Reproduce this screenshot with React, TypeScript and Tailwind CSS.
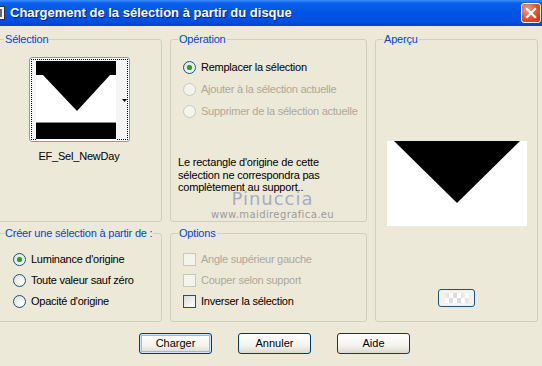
import React from "react"

const font = "font-['Liberation_Sans',Arial,sans-serif]"

const Radio = ({ checked, disabled }: { checked?: boolean; disabled?: boolean }) => (
  <span
    className={`relative inline-flex size-[13px] shrink-0 items-center justify-center rounded-full border ${
      disabled
        ? "border-[#cac8bb] bg-[#f5f4ea]"
        : "border-[#1c5180] bg-[radial-gradient(circle_at_70%_70%,#ffffff,#dcdcd3)]"
    }`}
  >
    {checked && <span className="size-[5px] rounded-full bg-[#21a121] shadow-[0_0_1px_#5fd25f]" />}
  </span>
)

const Check = ({ disabled }: { disabled?: boolean }) => (
  <span
    className={`inline-block size-[13px] shrink-0 border ${
      disabled
        ? "border-[#cac8bb] bg-[#f5f4ea]"
        : "border-[#1c5180] bg-[linear-gradient(135deg,#dcdcd3,#ffffff)]"
    }`}
  />
)

const Group = ({
  label,
  className,
  children,
}: {
  label: string
  className?: string
  children?: React.ReactNode
}) => (
  <fieldset className={`rounded-[3px] border border-[#d0d0bf] ${className ?? ""}`}>
    <legend className="ml-[7px] whitespace-nowrap px-[1px] text-[11px] leading-[13px] tracking-[-0.2px] text-[#0046d5]">
      {label}
    </legend>
    {children}
  </fieldset>
)

const Button = ({ label, primary }: { label: string; primary?: boolean }) => (
  <div
    className={`flex h-[21px] w-[73px] items-center justify-center rounded-[3px] border border-[#003c74] bg-[linear-gradient(#ffffff,#f4f3ee_60%,#dcd9cc)] text-[11px] text-black ${
      primary ? "shadow-[inset_0_0_0_1px_#cee7ff,inset_0_0_0_2px_#98b8ea]" : ""
    }`}
  >
    {label}
  </div>
)

const Row = ({ children, muted }: { children: React.ReactNode; muted?: boolean }) => (
  <div
    className={`flex items-center gap-[5px] whitespace-nowrap tracking-[-0.25px] ${
      muted ? "text-[#aca899]" : "text-black"
    }`}
  >
    {children}
  </div>
)

export default function App() {
  return (
    <div className={`h-[366px] w-[542px] overflow-hidden bg-[#ece9d8] ${font}`}>
      {/* title bar */}
      <div className="flex h-[26px] items-center bg-[linear-gradient(#3d8fff,#0a5fea_12%,#0055e5_45%,#0050e0_80%,#0045cf)]">
        <svg width="16" height="16" viewBox="0 0 16 16" className="-ml-[11px] shrink-0">
          <rect x="0.5" y="1.5" width="15" height="13" fill="#f0f0f0" stroke="#333" />
          <rect x="3" y="4" width="10" height="8" fill="#5a6a7a" />
        </svg>
        <span className="ml-[5px] whitespace-nowrap text-[13px] font-bold text-white [text-shadow:1px_1px_#0a1e8a]">
          Chargement de la sélection à partir du disque
        </span>
        <div className="ml-auto mr-[1px] flex size-[20px] items-center justify-center rounded-[3px] border border-white bg-[radial-gradient(circle_at_30%_30%,#f0a088,#e0502c_55%,#c53410)]">
          <svg width="12" height="12" viewBox="0 0 12 12">
            <path d="M2 2 L10 10 M10 2 L2 10" stroke="white" strokeWidth="2.2" strokeLinecap="square" />
          </svg>
        </div>
      </div>

      {/* body */}
      <div className="flex gap-[8px] pt-[7px]">
        {/* left column */}
        <div className="-ml-[4px] flex w-[166px] flex-col gap-[5px]">
          <Group label="Sélection" className="h-[189px]">
            <div className="flex flex-col items-center pt-[11px]">
              <div className="relative h-[85px] w-[101px] rounded-[3px] border border-[#7f9db9] bg-white p-[1px]">
                <div className="h-full w-full border border-dotted border-black bg-[#f4f4f4]">
                  <svg width="97" height="81" viewBox="0 0 97 81" className="block">
                    <rect x="4" y="1" width="80" height="79" fill="white" />
                    <polygon points="4,1 84,1 84,15 78,15 45,51 11,15 4,15" fill="black" />
                    <rect x="4" y="62" width="80" height="1" fill="#888" />
                    <rect x="4" y="63" width="80" height="16" fill="black" />
                    <polygon points="90,39 95,39 92.5,42" fill="black" />
                  </svg>
                </div>
              </div>
              <div className="mt-[8px] text-[11px] leading-[13px] tracking-[-0.2px] text-black">EF_Sel_NewDay</div>
            </div>
          </Group>
          <Group label="Créer une sélection à partir de :" className="h-[95px]">
            <div className="flex flex-col gap-[8px] pl-[16px] pt-[13px] text-[11px] leading-[13px]">
              <Row>
                <Radio checked />
                <span>Luminance d'origine</span>
              </Row>
              <Row>
                <Radio />
                <span>Toute valeur sauf zéro</span>
              </Row>
              <Row>
                <Radio />
                <span>Opacité d'origine</span>
              </Row>
            </div>
          </Group>
        </div>

        {/* middle column */}
        <div className="flex w-[197px] flex-col gap-[5px]">
          <Group label="Opération" className="h-[189px]">
            <div className="flex flex-col gap-[9px] pl-[12px] pt-[15px] text-[11px] leading-[13px]">
              <Row>
                <Radio checked />
                <span>Remplacer la sélection</span>
              </Row>
              <Row muted>
                <Radio disabled />
                <span>Ajouter à la sélection actuelle</span>
              </Row>
              <Row muted>
                <Radio disabled />
                <span>Supprimer de la sélection actuelle</span>
              </Row>
            </div>
            <div className="relative pl-[7px] pt-[38px] text-[11px] leading-[12.5px] tracking-[-0.2px] text-black">
              <p>
                Le rectangle d'origine de cette
                <br />
                sélection ne correspondra pas
                <br />
                complètement au support..
              </p>
              <div className="absolute left-0 right-0 top-[72px] pl-[8px] text-center">
                <div className="font-['DejaVu_Sans',sans-serif] text-[18px] leading-[18px] tracking-[1px] text-[#a9abc4]">
                  Pinuccia
                </div>
                <div className="mt-[1px] font-['DejaVu_Sans',sans-serif] text-[10px] leading-[11px] tracking-[0.4px] text-[#9a9aa2]">
                  www.maidiregrafica.eu
                </div>
              </div>
            </div>
          </Group>
          <Group label="Options" className="h-[95px]">
            <div className="flex flex-col gap-[8px] pl-[12px] pt-[13px] text-[11px] leading-[13px]">
              <Row muted>
                <Check disabled />
                <span>Angle supérieur gauche</span>
              </Row>
              <Row muted>
                <Check disabled />
                <span>Couper selon support</span>
              </Row>
              <Row>
                <Check />
                <span>Inverser la sélection</span>
              </Row>
            </div>
          </Group>
        </div>

        {/* right column */}
        <div className="w-[163px]">
          <Group label="Aperçu" className="h-[289px]">
            <div className="flex flex-col items-center pt-[95px]">
              <svg width="140" height="85" viewBox="0 0 140 85" className="block">
                <rect width="140" height="85" fill="white" />
                <polygon points="7,0 133,0 70,62" fill="black" />
              </svg>
              <div className="mt-[63px] flex h-[18px] w-[37px] items-center justify-center rounded-[3px] border border-[#1c5180] bg-[#f2f2f2]">
                <div className="grid h-[10px] w-[24px] grid-cols-6">
                  <span className="bg-[#e8e8e8]" />
                  <span className="bg-white" />
                  <span className="bg-[#dcdcdc]" />
                  <span className="bg-white" />
                  <span className="bg-[#e8e8e8]" />
                  <span className="bg-white" />
                  <span className="bg-white" />
                  <span className="bg-[#dcdcdc]" />
                  <span className="bg-white" />
                  <span className="bg-[#dcdcdc]" />
                  <span className="bg-white" />
                  <span className="bg-[#e8e8e8]" />
                </div>
              </div>
            </div>
          </Group>
        </div>
      </div>

      {/* buttons */}
      <div className="flex gap-[26px] pl-[139px] pt-[11px]">
        <Button label="Charger" primary />
        <Button label="Annuler" />
        <Button label="Aide" />
      </div>
    </div>
  )
}
